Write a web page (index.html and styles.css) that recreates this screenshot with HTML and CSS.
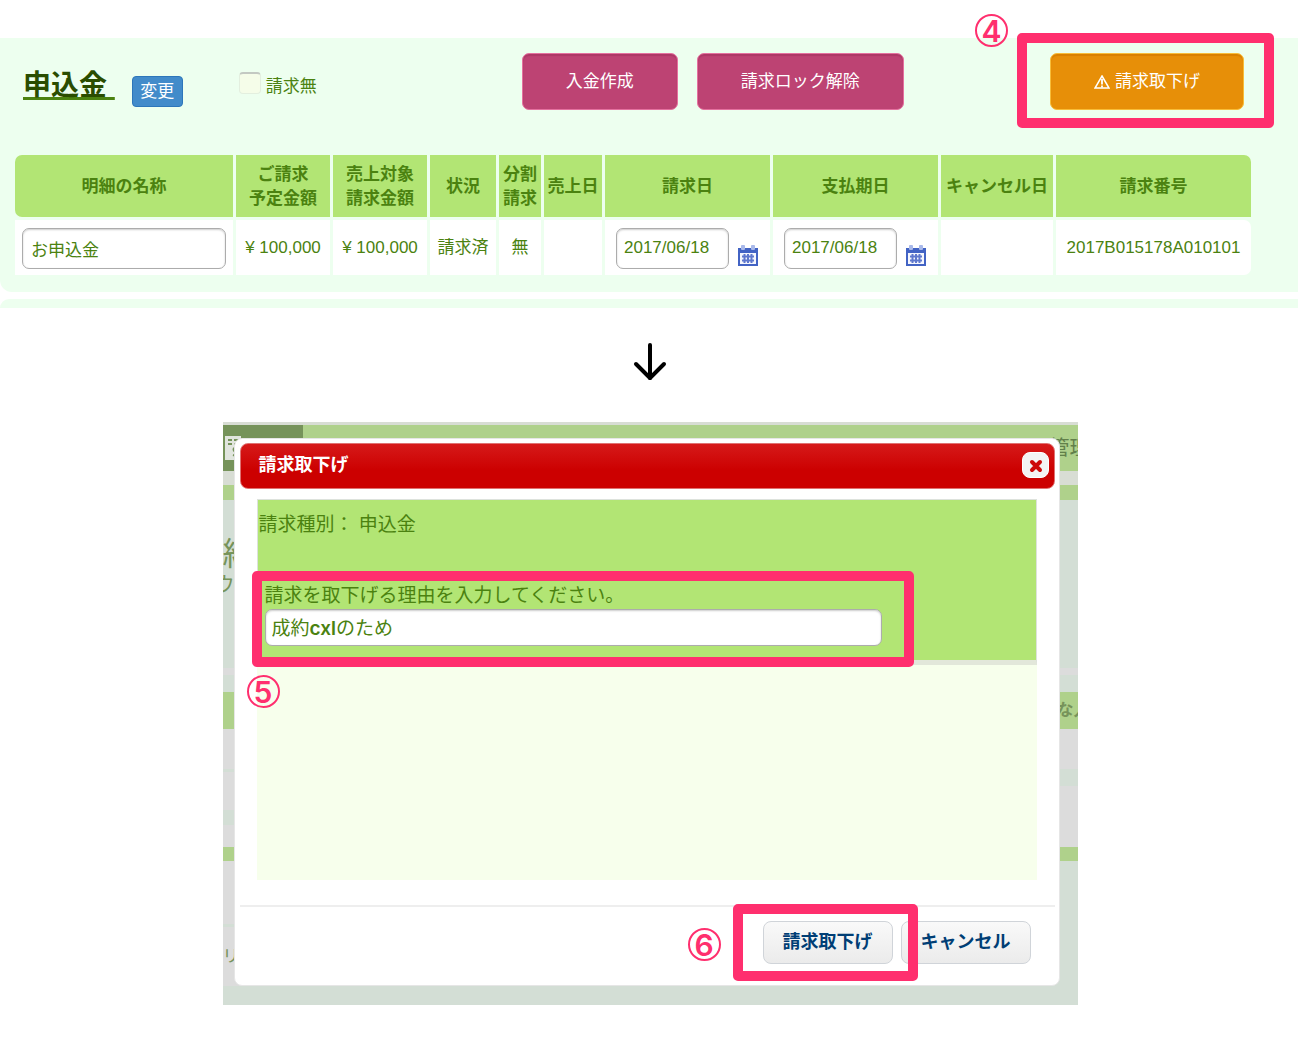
FILE: index.html
```html
<!DOCTYPE html>
<html lang="ja">
<head>
<meta charset="utf-8">
<meta name="viewport" content="width=device-width, initial-scale=1">
<title>請求取下げ</title>
<link rel="stylesheet" href="styles.css">
</head>
<body>
<svg class="defs" aria-hidden="true">
  <symbol id="calendar" viewBox="0 0 22 22">
    <rect x="1" y="3" width="20" height="18" fill="#4263c4"/>
    <rect x="3" y="8" width="16" height="11" fill="#f4f6fd"/>
    <rect x="4" y="0" width="4" height="5" rx="1" fill="#a9b9ea"/>
    <rect x="14" y="0" width="4" height="5" rx="1" fill="#a9b9ea"/>
    <path d="M7.500 9v9M11 9v9M14.500 9v9M5 11.500h12M5 15.500h12" stroke="#5f78cd" stroke-width="2"/>
  </symbol>
</svg>
<main class="page">
  <section class="billing">
    <div class="toolbar">
      <h1 class="title"><a href="#"><span>申込金</span>&nbsp;</a></h1>
      <button class="btn-edit" type="button">変更</button>
      <label class="no-bill"><input type="checkbox">請求無</label>
      <div class="actions">
        <button class="btn btn-pay" type="button">入金作成</button>
        <button class="btn btn-unlock" type="button">請求ロック解除</button>
      </div>
      <div class="marked marked-withdraw">
        <button class="btn btn-withdraw" type="button">
          <svg width="16" height="14" viewBox="0 0 16 14" fill="none" stroke="#fff" aria-hidden="true"><path d="M8 1 15 13H1Z" stroke-width="1.5"/><path d="M8 4v5.500M8 10.500v2" stroke-width="1.800"/></svg>
          請求取下げ
        </button>
        <span class="frame"></span>
        <span class="step">4</span>
      </div>
    </div>
    <table class="bills">
      <colgroup>
        <col class="c-name"><col class="c-amount"><col class="c-amount"><col class="c-state"><col class="c-split">
        <col class="c-sale"><col class="c-date"><col class="c-date"><col class="c-cancel"><col class="c-number">
      </colgroup>
      <thead>
        <tr>
          <th>明細の名称</th><th>ご請求<br>予定金額</th><th>売上対象<br>請求金額</th><th>状況</th><th>分割<br>請求</th>
          <th>売上日</th><th>請求日</th><th>支払期日</th><th>キャンセル日</th><th>請求番号</th>
        </tr>
      </thead>
      <tbody>
        <tr>
          <td><div class="cell"><input class="field" type="text" value="お申込金" aria-label="明細の名称"></div></td>
          <td>¥ 100,000</td><td>¥ 100,000</td><td>請求済</td><td>無</td><td></td>
          <td><div class="cell date"><input class="field" type="text" value="2017/06/18" aria-label="請求日"><button class="cal" type="button" aria-label="請求日を選択"><svg width="22" height="22"><use href="#calendar"/></svg></button></div></td>
          <td><div class="cell date"><input class="field" type="text" value="2017/06/18" aria-label="支払期日"><button class="cal" type="button" aria-label="支払期日を選択"><svg width="22" height="22"><use href="#calendar"/></svg></button></div></td>
          <td></td><td>2017B015178A010101</td>
        </tr>
      </tbody>
    </table>
  </section>
  <div class="billing-next"></div>

  <div class="flow">
  <svg class="arrow" width="34" height="38" viewBox="0 0 34 38" fill="none" stroke="#000" stroke-width="4" stroke-linecap="round" stroke-linejoin="round" aria-hidden="true"><path d="M17 2v33"/><path d="M3 21l14 14 14-14"/></svg>

  <section class="stage">
    <div class="backdrop" aria-hidden="true">
      <div class="nav">
        <div class="tab"><svg width="16" height="24" viewBox="0 0 16 24"><path d="M0 0h16v24H0z" fill="#e1e5de"/><path d="M3 4h4M3 8h4M9 4h6M9 8h6M13 12c-5-2-6 3-2 4s3 5-3 3" fill="none" stroke="#76935a" stroke-width="2"/></svg></div>
        <span>管理</span>
      </div>
      <div class="band gap"></div>
      <div class="band green rule"></div>
      <div class="band lead"><p class="lead-title">約</p><p class="lead-sub">ウ</p></div>
      <div class="band grey thin"></div>
      <div class="band spacer"></div>
      <div class="band green heading"><b>な人</b></div>
      <div class="columns">
        <div class="column column-left">
          <i class="line line-a"></i><i class="line line-b"></i><i class="line green line-c"></i><i class="line line-d"></i><p>リン</p>
        </div>
        <div class="column column-right">
          <i class="line line-e"></i><i class="line green line-f"></i><i class="line line-g"></i>
        </div>
      </div>
      <div class="band foot"></div>
    </div>

    <div class="dialog" role="dialog" aria-labelledby="dialog-title">
      <header class="dialog-head">
        <h2 id="dialog-title">請求取下げ</h2>
        <button class="close" type="button" aria-label="閉じる"><svg width="14" height="14" viewBox="0 0 14 14" aria-hidden="true"><path d="M3 3l8 8M11 3l-8 8" stroke="#cd0a0a" stroke-width="4" stroke-linecap="round"/></svg></button>
      </header>
      <div class="dialog-body">
        <div class="form">
          <p class="kind">請求種別： 申込金</p>
          <div class="marked marked-reason">
            <label for="reason">請求を取下げる理由を入力してください。</label>
            <input class="field" id="reason" type="text" value="成約cxlのため">
            <span class="frame"></span>
            <span class="step">5</span>
          </div>
        </div>
      </div>
      <footer class="dialog-foot">
        <div class="marked marked-submit">
          <button class="btn-dialog" type="button">請求取下げ</button>
          <span class="frame"></span>
          <span class="step">6</span>
        </div>
        <button class="btn-dialog" type="button">キャンセル</button>
      </footer>
    </div>
  </section>
  </div>
</main>
</body>
</html>
```
FILE: styles.css
```css
* { box-sizing: border-box; }
body {
  margin: 0;
  background: #fff;
  color: #4b8210;
  font: 17px/24px "Liberation Sans", "Noto Sans CJK JP", sans-serif;
}
h1, h2, p { margin: 0; }
button, input { margin: 0; font: inherit; color: inherit; }
.defs { position: absolute; width: 0; height: 0; }
.page { padding: 38px 0 32px; }

/* Billing section */
.billing {
  padding: 15px 44px 14px 12px;
  background: #edffef;
  border-bottom-left-radius: 12px;
}
.billing-next {
  height: 9px;
  margin-top: 7px;
  background: #edffef;
  border-top-left-radius: 12px;
}
.toolbar { display: flex; align-items: flex-start; padding: 0 10px 0 11px; }
.title { padding-top: 13px; font-size: 28px; line-height: 40px; white-space: nowrap; }
.title a {
  color: #4b8210;
  text-decoration: underline;
  text-decoration-thickness: 3px;
  text-underline-offset: 2px;
  text-decoration-skip-ink: none;
}
.title span { color: #2a4d00; }
.btn-edit {
  width: 51px;
  height: 31px;
  margin: 23px 0 0 17px;
  padding: 0;
  color: #fff;
  background: #428bca;
  border: 1px solid #2d76ba;
  border-radius: 4px;
}
.no-bill { display: flex; align-items: flex-start; gap: 5px; margin: 19px 0 0 56px; line-height: 30px; }
.no-bill input {
  appearance: none;
  width: 22px;
  height: 22px;
  background: #f5fde9;
  border: 1px solid #e3efdf;
  border-top: 2px solid #c3c9c2;
  border-radius: 4px;
}
.actions { display: flex; gap: 19px; margin-left: 205px; }
.btn {
  display: flex;
  align-items: center;
  justify-content: center;
  gap: 5px;
  height: 57px;
  padding: 0;
  color: #fff;
  border: 1px solid;
  border-radius: 7px;
  white-space: nowrap;
}
.btn-pay, .btn-unlock { background: #bd4373; border-color: #e5719f; box-shadow: inset 0 2px 1px #ad3866; }
.btn-pay { width: 156px; }
.btn-unlock { width: 207px; }
.btn-withdraw { width: 194px; background: #e78f08; border-color: #f9bd38; box-shadow: inset 0 2px 1px #d98000; }

/* Numbered highlight frames */
.marked { position: relative; }
.marked-withdraw { margin-left: auto; }
.frame { position: absolute; border: 10px solid #ff2f6e; border-radius: 5px; pointer-events: none; }
.step {
  position: absolute;
  display: flex;
  align-items: center;
  justify-content: center;
  width: 33px;
  height: 33px;
  color: #ff2f6e;
  border: 2px solid;
  border-radius: 50%;
  font: 600 30px/30px Inter, "Liberation Sans", sans-serif;
}
.marked-withdraw .frame { inset: -20px -30px -18px -33px; }
.marked-withdraw .step { top: -39px; left: -75px; }

/* Billing table */
.bills {
  width: 100%;
  margin-top: 42px;
  table-layout: fixed;
  border-collapse: separate;
  border-spacing: 3px;
  text-align: center;
}
.c-name { width: 218px; }
.c-amount { width: 94px; }
.c-state { width: 66px; }
.c-split { width: 42px; }
.c-sale { width: 58px; }
.c-date { width: 165px; }
.c-cancel { width: 112px; }
.c-number { width: 195px; }
.bills th { height: 62px; padding: 2px 0 0; background: #b2e574; white-space: nowrap; }
.bills th:first-child { border-radius: 7px 0 0 7px; }
.bills th:last-child { border-radius: 0 7px 0 0; }
.bills td { height: 55px; padding: 1px 0 0; background: #fff; white-space: nowrap; }
.bills td:last-child { border-radius: 0 7px 7px 0; }
.cell { display: flex; padding: 0 7px; }
.date { gap: 8px; padding: 0 11px; }
.date .field { flex: 0 0 113px; }
.field {
  width: 100%;
  height: 41px;
  padding: 0 8px;
  background: #fff;
  border: 1px solid #acacac;
  border-radius: 7px;
  box-shadow: inset 0 1px 2px #ccc;
}
.date .field { padding: 0 7px; }
.cal { align-self: flex-end; height: 25px; padding: 0; background: none; border: 0; }
.cal svg { display: block; }

.flow { padding-left: 2px; }
.arrow { display: block; margin: 35px auto 41px; }

/* Page behind the dialog */
.stage { display: grid; width: 855px; max-width: 100%; margin: 0 auto; }
.backdrop, .dialog { grid-area: 1 / 1; min-width: 0; }
.backdrop {
  display: flex;
  flex-direction: column;
  overflow: hidden;
  background: #d3ded5;
  border-top: 3px solid #d8ddd4;
  color: #76935a;
}
.nav {
  display: flex;
  justify-content: space-between;
  flex: 0 0 46px;
  overflow: hidden;
  background: #afd18b;
  color: #62804a;
  font-size: 20px;
  line-height: 46px;
}
.nav span { flex: 0 0 28px; min-width: 0; white-space: nowrap; }
.tab { flex: 0 0 80px; padding: 11px 2px; background: #76935a; }
.tab svg { display: block; }
.green { background: #afd18b; }
.grey { background: #dcdcdc; }
.gap { flex: 0 0 14px; background: #d8ddd4; }
.rule { flex: 0 0 15px; }
.lead { flex: 0 0 168px; padding-top: 34px; }
.lead-title { font-size: 32px; line-height: 40px; }
.lead-sub { margin-left: -8px; font-size: 20px; line-height: 22px; }
.thin { flex: 0 0 7px; }
.spacer { flex: 0 0 17px; }
.heading { display: flex; justify-content: flex-end; flex: 0 0 37px; line-height: 37px; overflow: hidden; }
.heading b { flex: 0 0 21px; min-width: 0; white-space: nowrap; }
.columns { display: grid; grid-template-columns: 1fr 1fr; flex: 1; }
.column { display: flex; flex-direction: column; background: #dcdcdc; }
.line { background: #d3ded5; }
.line.green { background: #afd18b; }
.line-a { height: 3px; margin-top: 40px; }
.line-b { height: 15px; margin-top: 38px; }
.line-c { height: 14px; margin-top: 22px; }
.line-d { height: 3px; margin-top: 63px; }
.column-left p { padding-top: 18px; }
.line-e { height: 17px; margin-top: 40px; }
.line-f { height: 14px; margin-top: 61px; }
.line-g { flex: 1; }
.foot { flex: 0 0 19px; }

/* Dialog */
.dialog {
  z-index: 1;
  margin: 16px 18px 19px 11px;
  padding: 4px 4px 21px 5px;
  background: #fff;
  border: 1px solid #e6e6e6;
  border-radius: 8px;
}
.dialog-head {
  display: flex;
  align-items: center;
  justify-content: space-between;
  height: 46px;
  padding: 0 5px 2px 18px;
  color: #fff;
  background: linear-gradient(#d61a1a, #cc0000 60%);
  border: 1px solid #e07272;
  border-radius: 8px;
}
.dialog-head h2 { font-size: 18px; line-height: 24px; }
.close {
  display: flex;
  align-items: center;
  justify-content: center;
  width: 27px;
  height: 26px;
  padding: 2px 0 0 2px;
  background: #f3f3f3;
  border: 1px solid #fff;
  border-radius: 8px;
}
.dialog-body { height: 381px; margin: 10px 18px 25px 17px; background: #f7ffec; font-size: 19px; }
.form {
  height: 166px;
  padding: 13px 5px 0 7px;
  background: #b2e574;
  border: 1px solid #dde2dc;
  border-bottom: 5px solid #e2e7da;
}
.kind { margin-left: -6px; }
.marked-reason { width: 617px; max-width: 100%; margin-top: 46px; }
.marked-reason label { display: block; line-height: 26px; }
.marked-reason .field {
  display: block;
  height: 37px;
  padding: 0 6px 2px;
  font-family: "Inter SemiBold", "Liberation Sans", "Noto Sans CJK JP", sans-serif;
}
.marked-reason .frame { inset: -12px -32px -21px -13px; }
.marked-reason .step { bottom: -62px; left: -18px; }
.dialog-foot {
  display: flex;
  justify-content: flex-end;
  gap: 8px;
  padding: 14px 24px 0;
  border-top: 2px solid #eee;
}
.btn-dialog {
  display: block;
  width: 130px;
  height: 43px;
  padding: 0 0 2px;
  color: #003e75;
  background: linear-gradient(#f9f9f9, #ebebeb);
  border: 1px solid #d0d4d9;
  border-radius: 8px;
  font-size: 18px;
  font-weight: 700;
}
.marked-submit .frame { inset: -17px -25px; left: -30px; z-index: 1; }
.marked-submit .step { top: 7px; left: -75px; }
```
